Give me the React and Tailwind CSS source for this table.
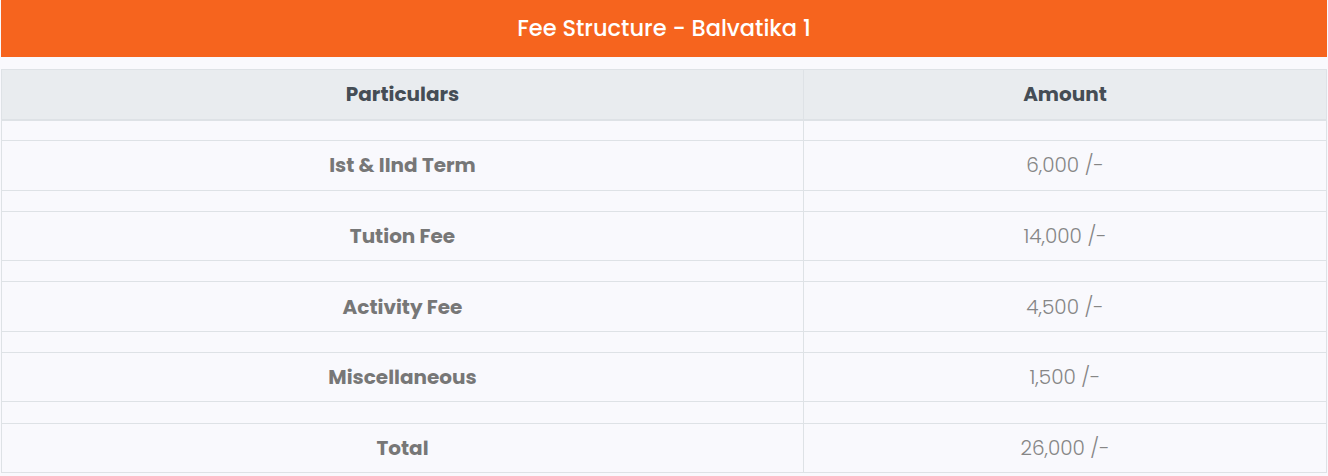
import React from "react";

const rows = [
  ["Ist & IInd Term", "6,000 /-"],
  ["Tution Fee", "14,000 /-"],
  ["Activity Fee", "4,500 /-"],
  ["Miscellaneous", "1,500 /-"],
  ["Total", "26,000 /-"],
];

export default function App() {
  return (
    <div
      className="w-[1328px] h-[476px] bg-[#f9f9fd] px-[1px]"
      style={{ fontFamily: "Poppins, Inter, 'Open Sans', sans-serif" }}
    >
      <div className="h-[57px] bg-[#f6641e] flex items-center justify-center text-white text-[22.5px] font-medium">
        Fee Structure - Balvatika 1
      </div>
      <table className="mt-[12px] w-[1326px] border-collapse table-fixed">
        <colgroup>
          <col className="w-[802px]" />
          <col />
        </colgroup>
        <thead>
          <tr className="bg-[#e9ecef] h-[50px]">
            <th className="border border-[#dee2e6] border-b-2 text-[20px] font-bold text-[#454d55] text-center">
              Particulars
            </th>
            <th className="border border-[#dee2e6] border-b-2 text-[20px] font-bold text-[#454d55] text-center">
              Amount
            </th>
          </tr>
        </thead>
        <tbody>
          {rows.map(([p, a]) => (
            <React.Fragment key={p}>
              <tr className="h-[21.2px]">
                <td className="border border-[#dee2e6]"></td>
                <td className="border border-[#dee2e6]"></td>
              </tr>
              <tr className="h-[49.4px]">
                <td className="border border-[#dee2e6] text-center text-[20px] font-bold text-[#777777]">
                  {p}
                </td>
                <td className="border border-[#dee2e6] text-center text-[20px] font-light text-[#868686]">
                  {a}
                </td>
              </tr>
            </React.Fragment>
          ))}
        </tbody>
      </table>
    </div>
  );
}
